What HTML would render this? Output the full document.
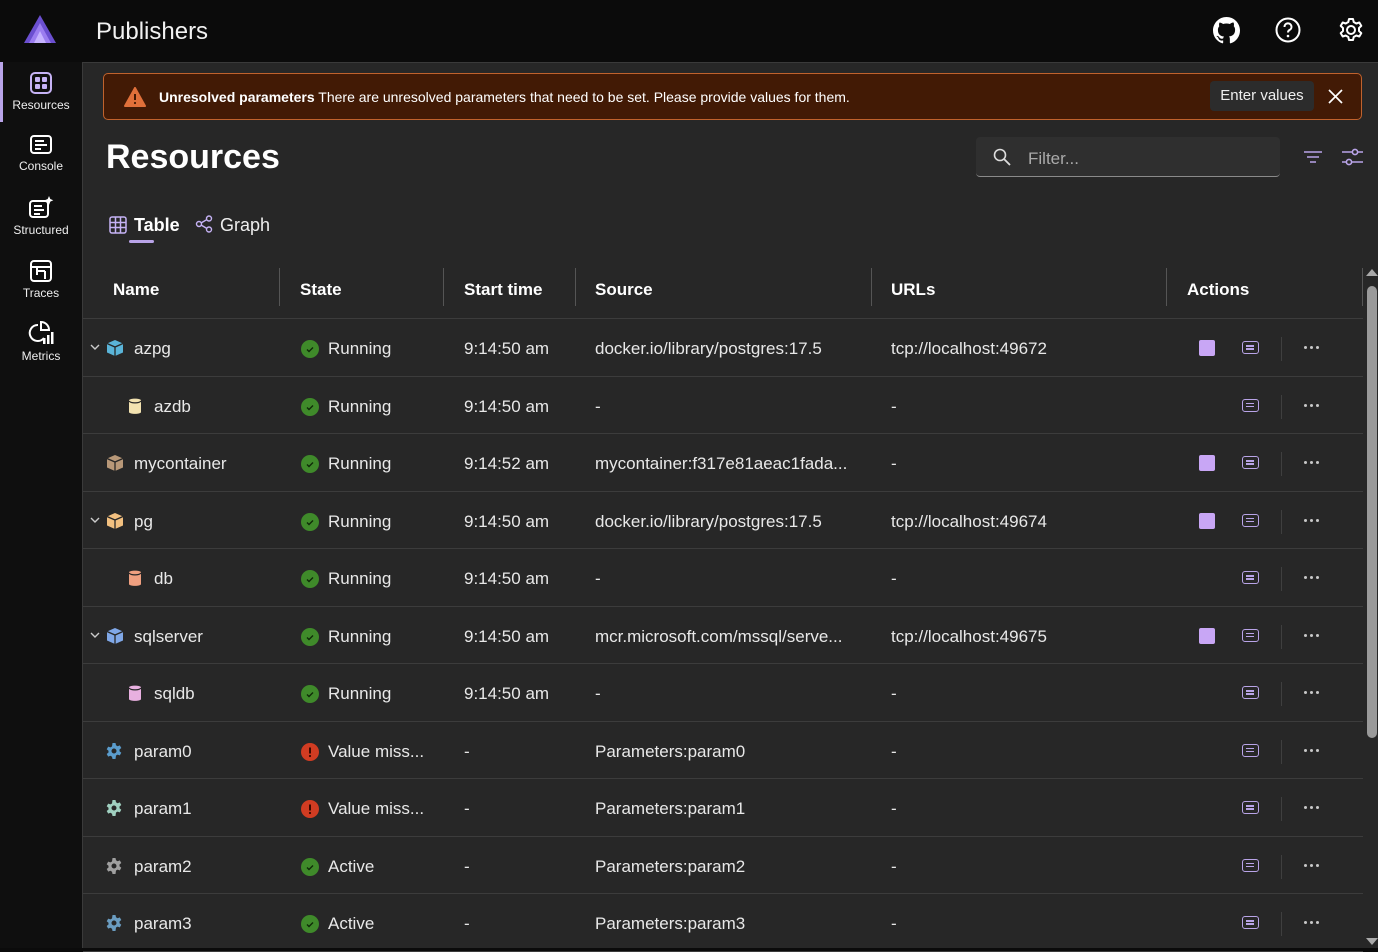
<!DOCTYPE html>
<html><head><meta charset="utf-8"><style>
*{box-sizing:border-box;margin:0;padding:0}
body{width:1378px;height:948px;background:#0b0b0b;font-family:"Liberation Sans",sans-serif;color:#fff;overflow:hidden;position:relative}
.top{position:absolute;left:0;top:0;width:1378px;height:62px;background:#0b0b0b}
.title{position:absolute;left:96px;top:18px;font-size:24px;color:#f2f2f2}
.side{position:absolute;left:0;top:62px;width:82px;height:886px;background:#0f0f0f}
.nav{position:absolute;left:0;width:82px;text-align:center;font-size:12px;color:#eee}
.nav svg{display:block;margin:0 auto 3px}
.main{position:absolute;left:82px;top:62px;width:1296px;height:886px;background:#272727;border-top:1px solid #3a3a3a;border-left:1px solid #3a3a3a}
.banner{position:absolute;left:103px;top:73px;width:1259px;height:47px;background:#421a05;border:1px solid #c0622d;border-radius:5px;font-size:14px}
.btn{position:absolute;left:1210px;top:81px;width:104px;height:30px;background:#2c2c2c;border-radius:4px;font-size:15px;line-height:30px;text-align:center;color:#eee}
h1{position:absolute;left:106px;top:138px;font-size:34px;font-weight:bold;color:#fff}
.filter{position:absolute;left:976px;top:137px;width:304px;height:40px;background:#2f2f2f;border-radius:4px;border-bottom:1px solid #8a8a8a;font-size:17px;color:#aaa}
.tabs{position:absolute;top:215px;font-size:18px}
.hdr{position:absolute;top:268px;height:50px;font-size:17px;font-weight:bold;line-height:44px}
.sep{position:absolute;top:268px;width:1px;height:38px;background:#555}
.row{position:absolute;left:83px;width:1280px;height:57.5px;border-bottom:1px solid #3c3c3c;font-size:17px;color:#e8e8e8}
.row span{position:absolute;top:20px;white-space:nowrap}
.dot{position:absolute;top:21px;width:18px;height:18px;border-radius:50%}
.sq{position:absolute;left:1116px;top:21px;width:16px;height:16px;background:#c8a6f5;border-radius:2px}
.log{position:absolute;left:1159px;top:22px;width:17px;height:13px;border:1.5px solid #b9a4e8;border-radius:3px}
.log:before{content:"";position:absolute;left:3px;top:3px;width:8px;height:1.5px;background:#b9a4e8;box-shadow:0 3px 0 #b9a4e8}
.vs{position:absolute;left:1198px;top:18px;width:1px;height:24px;background:#3f3f3f}
.dots{position:absolute;left:1221px;top:27px;width:3px;height:3px;border-radius:50%;background:#c8c8c8;box-shadow:6px 0 0 #c8c8c8,12px 0 0 #c8c8c8}
</style></head><body>
<div class="top">
<svg style="position:absolute;left:24px;top:15px" width="32" height="28" viewBox="0 0 32 28"><path d="M16 0 L32 28 H0Z" fill="#6b4fd0"/><path d="M16 8 L27 28 H5Z" fill="#9b7df0"/><path d="M16 16 L22 28 H10Z" fill="#c6b3ff"/></svg>
<div class="title">Publishers</div>
<svg style="position:absolute;left:1213px;top:17px" width="27" height="27" viewBox="0 0 16 16"><path fill="#fff" d="M8 0C3.58 0 0 3.58 0 8c0 3.54 2.29 6.53 5.47 7.59.4.07.55-.17.55-.38v-1.33c-2.23.48-2.7-1.07-2.7-1.07-.36-.92-.89-1.17-.89-1.17-.73-.5.06-.49.06-.49.8.06 1.23.83 1.23.83.72 1.22 1.87.87 2.33.66.07-.52.28-.87.51-1.07-1.78-.2-3.65-.89-3.65-3.95 0-.87.31-1.59.82-2.15-.08-.2-.36-1.02.08-2.12 0 0 .67-.21 2.2.82A7.6 7.6 0 0 1 8 3.86c.68 0 1.36.09 2 .27 1.53-1.04 2.2-.82 2.2-.82.44 1.1.16 1.92.08 2.12.51.56.82 1.27.82 2.15 0 3.07-1.87 3.75-3.65 3.95.29.25.54.73.54 1.48v2.2c0 .21.15.46.55.38A8 8 0 0 0 16 8c0-4.42-3.58-8-8-8z"/></svg>
<svg style="position:absolute;left:1275px;top:17px" width="26" height="26" viewBox="0 0 26 26"><circle cx="13" cy="13" r="11.5" fill="none" stroke="#fff" stroke-width="2"/><path d="M9.5 10a3.5 3.5 0 1 1 5 3c-1 .6-1.5 1.2-1.5 2.5" fill="none" stroke="#fff" stroke-width="2"/><circle cx="13" cy="19" r="1.3" fill="#fff"/></svg>
<svg style="position:absolute;left:1338px;top:17px" width="26" height="26" viewBox="0 0 26 26"><circle cx="13" cy="13" r="4" fill="none" stroke="#fff" stroke-width="2"/><path d="M11 2h4l.7 3 2.6 1.5 3-1 2 3.4-2.3 2.1v3l2.3 2.1-2 3.4-3-1-2.6 1.5-.7 3h-4l-.7-3-2.6-1.5-3 1-2-3.4 2.3-2.1v-3L2.7 8.9l2-3.4 3 1L10.3 5z" fill="none" stroke="#fff" stroke-width="2" stroke-linejoin="round"/></svg>
</div>
<div class="side">
<div style="position:absolute;left:0;top:0;width:3px;height:60px;background:#b9a4e8"></div>
<div class="nav" style="top:9px"><svg width="24" height="24" viewBox="0 0 24 24"><rect x="2" y="2" width="20" height="20" rx="4" fill="none" stroke="#c6b3f5" stroke-width="2"/><rect x="6" y="6" width="5" height="5" rx="1" fill="#c6b3f5"/><rect x="13" y="6" width="5" height="5" rx="1" fill="#c6b3f5"/><rect x="6" y="13" width="5" height="5" rx="1" fill="#c6b3f5"/><rect x="13" y="13" width="5" height="5" rx="1" fill="#c6b3f5"/></svg>Resources</div>
<div class="nav" style="top:72px"><svg width="24" height="22" viewBox="0 0 24 22"><rect x="2" y="2" width="20" height="17" rx="3" fill="none" stroke="#fff" stroke-width="2"/><path d="M6 7h9M6 11h12M6 15h6" stroke="#fff" stroke-width="2"/></svg>Console</div>
<div class="nav" style="top:134px"><svg width="26" height="24" viewBox="0 0 26 24"><rect x="2" y="5" width="18" height="16" rx="3" fill="none" stroke="#fff" stroke-width="2"/><path d="M6 10h8M6 14h10M6 18h6" stroke="#fff" stroke-width="2"/><path d="M21 0l1.3 3 3 1.3-3 1.3L21 9l-1.3-3.4-3-1.3 3-1.3z" fill="#fff"/></svg>Structured</div>
<div class="nav" style="top:197px"><svg width="24" height="24" viewBox="0 0 24 24"><rect x="2" y="2" width="20" height="20" rx="3" fill="none" stroke="#fff" stroke-width="2"/><path d="M2 8h20M8 8v8M8 12h8M16 12v8" stroke="#fff" stroke-width="2" fill="none"/></svg>Traces</div>
<div class="nav" style="top:258px"><svg width="26" height="26" viewBox="0 0 26 26"><path d="M10 5a8 8 0 1 0 6 13" fill="none" stroke="#fff" stroke-width="2"/><path d="M13 2a8 8 0 0 1 8 8h-8z" fill="none" stroke="#fff" stroke-width="2"/><rect x="15" y="18" width="2.5" height="6" fill="#fff"/><rect x="19" y="15" width="2.5" height="9" fill="#fff"/><rect x="23" y="12" width="2.5" height="12" fill="#fff"/></svg>Metrics</div>
</div>
<div class="main"></div>
<div class="banner">
<svg style="position:absolute;left:20px;top:13px" width="22" height="20" viewBox="0 0 22 20"><path d="M11 1L21 19H1Z" fill="#e0703a" stroke="#e0703a" stroke-linejoin="round" stroke-width="2"/><path d="M11 7v6" stroke="#421a05" stroke-width="2"/><circle cx="11" cy="16" r="1.1" fill="#421a05"/></svg>
<span style="position:absolute;left:55px;top:15px"><b>Unresolved parameters</b> There are unresolved parameters that need to be set. Please provide values for them.</span>
</div>
<div class="btn">Enter values</div>
<svg style="position:absolute;left:1328px;top:89px" width="15" height="15" viewBox="0 0 15 15"><path d="M1 1L14 14M14 1L1 14" stroke="#fff" stroke-width="1.7"/></svg>
<h1>Resources</h1>
<div class="filter"><svg style="position:absolute;left:17px;top:11px" width="18" height="18" viewBox="0 0 18 18"><circle cx="7" cy="7" r="5.5" fill="none" stroke="#ddd" stroke-width="1.6"/><path d="M11 11l6 6" stroke="#ddd" stroke-width="1.8"/></svg><span style="position:absolute;left:52px;top:12px">Filter...</span></div>
<svg style="position:absolute;left:1303px;top:150px" width="20" height="14" viewBox="0 0 20 14"><path d="M1 2h18M4 7h12M7 12h6" stroke="#b9a4e8" stroke-width="1.6"/></svg>
<svg style="position:absolute;left:1341px;top:147px" width="22" height="20" viewBox="0 0 22 20"><path d="M1 5h21M1 15h21" stroke="#b9a4e8" stroke-width="1.6"/><circle cx="14" cy="5" r="2.6" fill="#272727" stroke="#b9a4e8" stroke-width="1.6"/><circle cx="8" cy="15" r="2.6" fill="#272727" stroke="#b9a4e8" stroke-width="1.6"/></svg>
<svg style="position:absolute;left:109px;top:216px" width="18" height="18" viewBox="0 0 18 18"><rect x="1" y="1" width="16" height="16" rx="2" fill="none" stroke="#c6b3f5" stroke-width="1.5"/><path d="M1 6.5h16M1 11.5h16M6.5 1v16M11.5 1v16" stroke="#c6b3f5" stroke-width="1.5"/></svg>
<div class="tabs" style="left:134px;font-weight:bold">Table</div>
<div style="position:absolute;left:129px;top:240px;width:25px;height:3px;background:#b9a4e8;border-radius:2px"></div>
<svg style="position:absolute;left:195px;top:215px" width="18" height="18" viewBox="0 0 18 18"><circle cx="4" cy="9" r="2.5" fill="none" stroke="#c6b3f5" stroke-width="1.4"/><circle cx="14" cy="3.5" r="2.5" fill="none" stroke="#c6b3f5" stroke-width="1.4"/><circle cx="14" cy="14.5" r="2.5" fill="none" stroke="#c6b3f5" stroke-width="1.4"/><path d="M6 8l6-3.5M6 10l6 3.5" stroke="#c6b3f5" stroke-width="1.4"/></svg>
<div class="tabs" style="left:220px;color:#eee">Graph</div>
<div class="hdr" style="left:113px">Name</div><div class="sep" style="left:279px"></div>
<div class="hdr" style="left:300px">State</div><div class="sep" style="left:443px"></div>
<div class="hdr" style="left:464px">Start time</div><div class="sep" style="left:575px"></div>
<div class="hdr" style="left:595px">Source</div><div class="sep" style="left:871px"></div>
<div class="hdr" style="left:891px">URLs</div><div class="sep" style="left:1166px"></div>
<div class="hdr" style="left:1187px">Actions</div><div class="sep" style="left:1362px"></div>
<div style="position:absolute;left:83px;top:318px;width:1280px;height:1px;background:#3c3c3c"></div>
<div style="position:absolute;left:1367px;top:286px;width:10px;height:452px;background:#9a9a9a;border-radius:5px"></div>
<svg style="position:absolute;left:1366px;top:268px" width="12" height="8"><path d="M0 8L6 1 12 8z" fill="#aaa"/></svg>
<svg style="position:absolute;left:1366px;top:938px" width="12" height="8"><path d="M0 0L6 7 12 0z" fill="#aaa"/></svg>
<div id="rows"></div>
<script>
var R=[
["azpg",1,"#5ab4d8","box","ok","Running","9:14:50 am","docker.io/library/postgres:17.5","tcp://localhost:49672",1],
["azdb",0,"#f2e2b0","db","ok","Running","9:14:50 am","-","-",0],
["mycontainer",2,"#b89878","box","ok","Running","9:14:52 am","mycontainer:f317e81aeac1fada...","-",1],
["pg",1,"#f2c080","box","ok","Running","9:14:50 am","docker.io/library/postgres:17.5","tcp://localhost:49674",1],
["db",0,"#f0a080","db","ok","Running","9:14:50 am","-","-",0],
["sqlserver",1,"#80a8e8","box","ok","Running","9:14:50 am","mcr.microsoft.com/mssql/serve...","tcp://localhost:49675",1],
["sqldb",0,"#e8b0e0","db","ok","Running","9:14:50 am","-","-",0],
["param0",2,"#5a9ccc","gear","err","Value miss...","-","Parameters:param0","-",0],
["param1",2,"#a0d0c0","gear","err","Value miss...","-","Parameters:param1","-",0],
["param2",2,"#a0a0a0","gear","ok","Active","-","Parameters:param2","-",0],
["param3",2,"#6a9cc0","gear","ok","Active","-","Parameters:param3","-",0]];
var h="";
R.forEach(function(r,i){
var top=319+i*57.5,ix=r[1]==0?45:23,tx=r[1]==0?71:51,ic;
if(r[3]=="box")ic='<svg style="position:absolute;left:'+ix+'px;top:20px" width="18" height="18" viewBox="0 0 18 18"><path d="M9 1L17 4.5V13.5L9 17L1 13.5V4.5Z" fill="'+r[2]+'"/><path d="M1 4.5L9 8L17 4.5M9 8V17" stroke="#272727" stroke-width="1.3" fill="none"/></svg>';
else if(r[3]=="db")ic='<svg style="position:absolute;left:'+ix+'px;top:20px" width="14" height="18" viewBox="0 0 14 18"><path d="M1 3.5C1 1 13 1 13 3.5V15C13 17.5 1 17.5 1 15Z" fill="'+r[2]+'"/><path d="M1 4C3 6.5 11 6.5 13 4" stroke="#272727" stroke-width="1.2" fill="none"/></svg>';
else ic='<svg style="position:absolute;left:'+ix+'px;top:21px" width="16" height="16" viewBox="0 0 16 16"><path fill="'+r[2]+'" fill-rule="evenodd" d="M6.5 0h3l.5 2.3 1.6.9 2.2-.8 1.5 2.6-1.8 1.5v1.8l1.8 1.5-1.5 2.6-2.2-.8-1.6.9L9.5 16h-3l-.5-2.3-1.6-.9-2.2.8L.7 11l1.8-1.5V7.7L.7 6.2 2.2 3.6l2.2.8L6 3.5zM8 5.5a2.5 2.5 0 1 0 0 5 2.5 2.5 0 0 0 0-5z"/></svg>';
h+='<div class="row" style="top:'+top+'px">';
if(r[1]==1)h+='<svg style="position:absolute;left:7px;top:25px" width="10" height="7"><path d="M1 1l4 4 4-4" stroke="#ccc" stroke-width="1.4" fill="none"/></svg>';
h+=ic+'<span style="left:'+tx+'px">'+r[0]+'</span>';
h+=r[4]=="ok"?'<div class="dot" style="left:218px;background:#3f8a2a"><svg width="18" height="18"><path d="M6 9.5l2 2 4-4" stroke="#0f2a08" stroke-width="1.4" fill="none"/></svg></div>':'<div class="dot" style="left:218px;background:#d13c22"><svg width="18" height="18"><path d="M9 4.5v6" stroke="#3a0a00" stroke-width="2"/><circle cx="9" cy="13" r="1.1" fill="#3a0a00"/></svg></div>';
h+='<span style="left:245px">'+r[5]+'</span><span style="left:381px">'+r[6]+'</span><span style="left:512px">'+r[7]+'</span><span style="left:808px">'+r[8]+'</span>';
if(r[9])h+='<div class="sq"></div>';
h+='<div class="log"></div><div class="vs"></div><div class="dots"></div></div>';
});
document.getElementById("rows").innerHTML=h;
</script>
</body></html>
